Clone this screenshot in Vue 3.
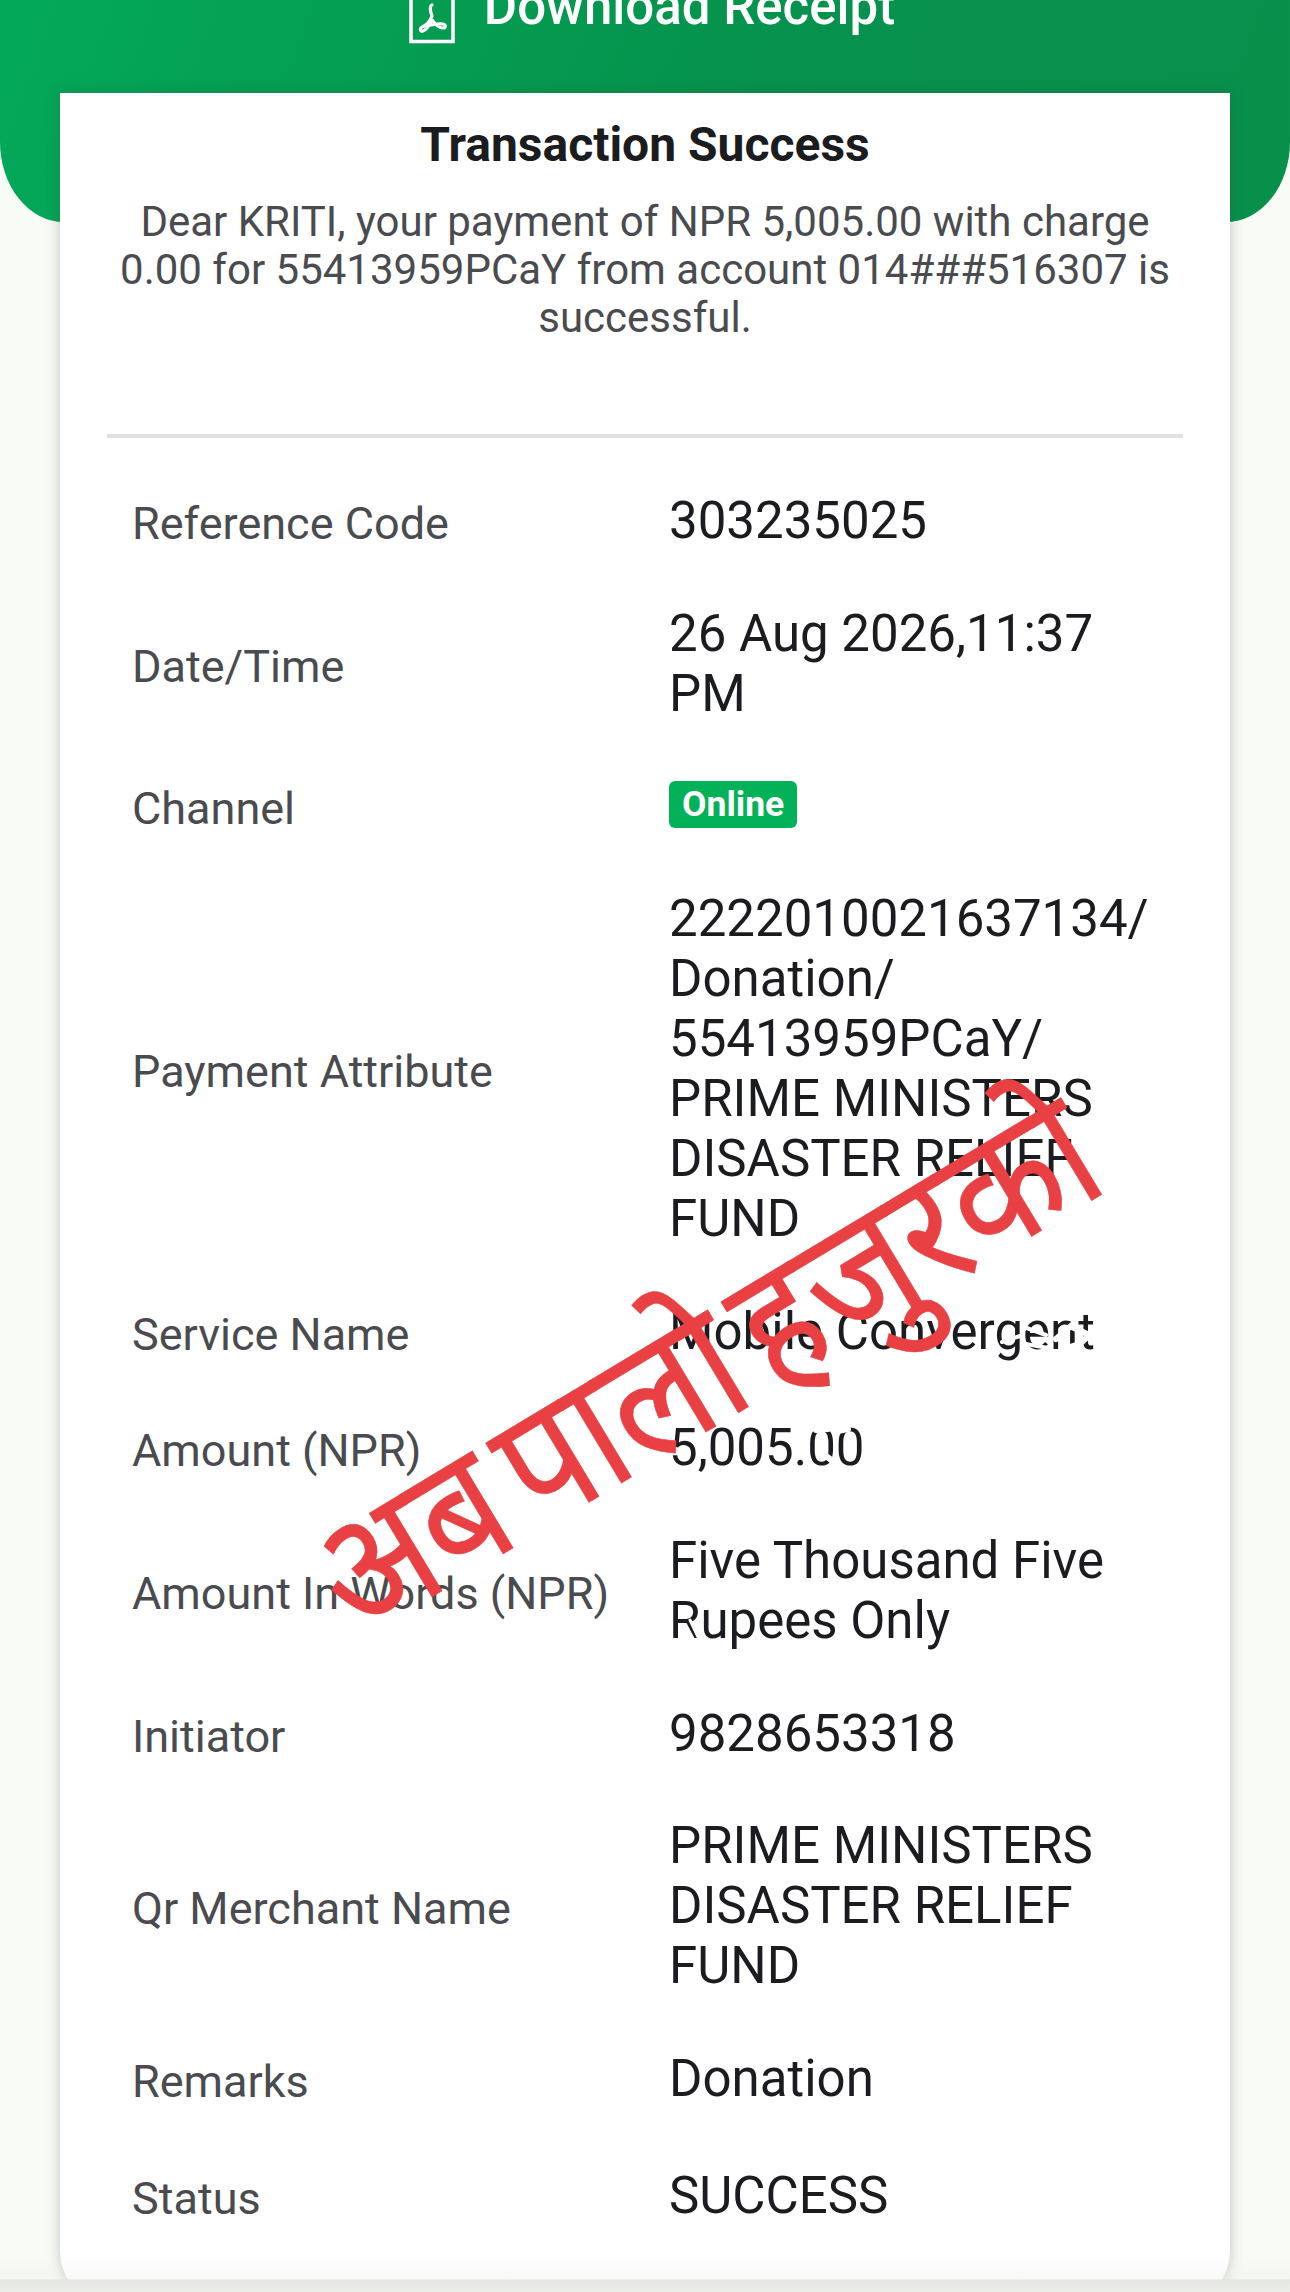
<script setup>
const rows = [
  { label: 'Reference Code', value: '303235025' },
  { label: 'Date/Time', value: '26 Aug 2026,11:37 PM' },
  { label: 'Channel', badge: 'Online' },
  { label: 'Payment Attribute', value: '2222010021637134/ Donation/ 55413959PCaY/ PRIME MINISTERS DISASTER RELIEF FUND' },
  { label: 'Service Name', value: 'Mobile Convergent' },
  { label: 'Amount (NPR)', value: '5,005.00' },
  { label: 'Amount In Words (NPR)', value: 'Five Thousand Five Rupees Only' },
  { label: 'Initiator', value: '9828653318' },
  { label: 'Qr Merchant Name', value: 'PRIME MINISTERS DISASTER RELIEF FUND' },
  { label: 'Remarks', value: 'Donation' },
  { label: 'Status', value: 'SUCCESS' },
]
</script>

<template>
  <div class="page">
    <header class="hero">
      <div class="download">
        <svg class="pdf" width="46" height="44" viewBox="0 0 46 44" fill="none">
          <path d="M2 0V41.500H44V0" stroke="#fff" stroke-width="3.500" />
          <path d="M23 5C20 6 21.500 12 23 16C21 21 18 25 13 27C10.500 28.500 11 32 14 31C18 30 21 24 23 20C26 24 30 28 34 28C37 28 37 24.500 34 24C30 23.500 26.500 24 22 25" stroke="#fff" stroke-width="3.200" stroke-linecap="round" stroke-linejoin="round" />
        </svg>
        <span>Download Receipt</span>
      </div>
    </header>
    <main class="card">
      <h1>Transaction Success</h1>
      <p class="message">Dear KRITI, your payment of NPR 5,005.00 with charge 0.00 for 55413959PCaY from account 014###516307 is successful.</p>
      <div class="details">
        <div v-for="row in rows" :key="row.label" class="row">
          <div class="label">{{ row.label }}</div>
          <div class="value">
            <span v-if="row.badge" class="badge">{{ row.badge }}</span>
            <template v-else>{{ row.value }}</template>
          </div>
        </div>
      </div>
      <svg class="erase" width="1170" height="2217" viewBox="60 93 1170 2217" fill="none" stroke="#fff" stroke-linecap="round">
        <path d="M1002 1342L1020 1336M1024 1327L1046 1335M1026 1344L1048 1348" stroke-width="4" />
        <path d="M1056 1339L1072 1325M1064 1349L1076 1345M1072 1327L1098 1339M1074 1349L1092 1333" stroke-width="6" />
        <path d="M816 1430L828 1429M826 1456L838 1465M838 1431L848 1429" stroke-width="6" />
        <path d="M690 1620L700 1641" stroke-width="3" />
      </svg>
      <div class="stamp">अब पालो हजुरको</div>
    </main>
    <div class="bottom-edge"></div>
  </div>
</template>

<style>
html, body { margin: 0; background: #f9fcf6; }
</style>

<style scoped>
.page {
  width: 1290px;
  height: 2292px;
  overflow: hidden;
  position: relative;
  background: #f9fcf6;
  font-family: Roboto, "Noto Sans", sans-serif;
}
.hero {
  height: 222px;
  border-radius: 0 0 64px 64px / 0 0 80px 80px;
  background: linear-gradient(110deg, #03a958 0%, #06914c 60%, #08904b 100%);
  display: flex;
  justify-content: center;
  color: #fff;
}
.download {
  display: flex;
  align-items: flex-start;
  gap: 29px;
  height: 42px;
  margin-left: 14px;
  font-size: 51px;
  font-weight: 500;
}
.download span { line-height: 14px; }
.card {
  position: relative;
  width: 1170px;
  height: 2217px;
  margin: -129px auto 0;
  padding: 22px 47px 0;
  box-sizing: border-box;
  background: #fff;
  border-radius: 0 0 60px 60px;
  box-shadow: 0 0 14px rgba(60, 70, 60, .3);
}
h1 {
  margin: 0;
  text-align: center;
  font-size: 48px;
  line-height: 60px;
  font-weight: 700;
  color: #1a1c20;
}
.message {
  margin: 23px 0 0;
  padding-bottom: 92px;
  border-bottom: 4px solid #dfe1e2;
  text-align: center;
  font-size: 42px;
  line-height: 48px;
  color: #4a4b4f;
}
.details { padding: 27px 25px 0; }
.row {
  display: grid;
  grid-template-columns: 537px 488px;
  align-items: center;
  padding: 21.850px 0;
}
.label {
  font-size: 45px;
  line-height: 73px;
  color: #4a4b4f;
}
.value {
  margin-bottom: 5px;
  font-size: 51px;
  line-height: 60px;
  color: #1a1c20;
}
.badge {
  display: inline-block;
  vertical-align: top;
  margin-top: 5px;
  padding: 0 13px;
  border-radius: 6px;
  background: #03b158;
  color: #fff;
  font-size: 35.500px;
  line-height: 47px;
  font-weight: 700;
}
.erase {
  position: absolute;
  left: 0;
  top: 0;
  pointer-events: none;
}
.stamp {
  position: absolute;
  left: 646px;
  top: 1273px;
  color: #e94043;
  font-size: 155px;
  line-height: 1;
  word-spacing: -20px;
  white-space: nowrap;
  -webkit-text-stroke: 0.500px #e94043;
  transform: translate(-50%, -50%) rotate(-31deg) scale(.94, 1.08);
}
.bottom-edge {
  position: absolute;
  left: 0;
  right: 0;
  bottom: 0;
  height: 40px;
  background: linear-gradient(to bottom, rgba(228, 232, 226, 0) 0, rgba(228, 232, 226, .25) 27px, #e3e7e1 28px, #eceee9 40px);
}
</style>
